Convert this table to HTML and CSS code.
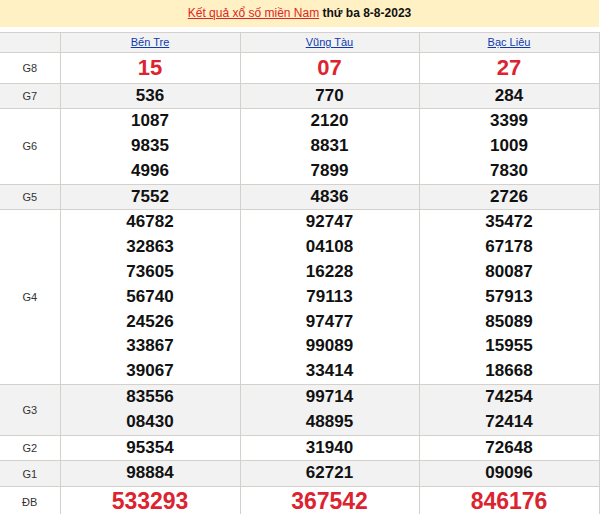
FILE: index.html
```html
<!DOCTYPE html>
<html lang="vi">
<head>
<meta charset="utf-8">
<title>Kết quả xổ số miền Nam</title>
<link rel="stylesheet" href="styles.css">
</head>
<body>
<div class="banner"><a class="title-link" href="#">Kết quả xổ số miền Nam</a> <b>thứ ba 8-8-2023</b></div>
<table class="kq">
  <colgroup><col class="c-lbl"><col class="c-a"><col class="c-b"><col class="c-c"></colgroup>
  <tr class="head alt">
    <th></th>
    <th><a href="#">Bến Tre</a></th>
    <th><a href="#">Vũng Tàu</a></th>
    <th><a href="#">Bạc Liêu</a></th>
  </tr>
  <tr class="big">
    <td class="lbl">G8</td>
    <td><div class="red">15</div></td>
    <td><div class="red">07</div></td>
    <td><div class="red">27</div></td>
  </tr>
  <tr class="alt">
    <td class="lbl">G7</td>
    <td><div class="n">536</div></td>
    <td><div class="n">770</div></td>
    <td><div class="n">284</div></td>
  </tr>
  <tr>
    <td class="lbl">G6</td>
    <td><div class="n">1087</div><div class="n">9835</div><div class="n">4996</div></td>
    <td><div class="n">2120</div><div class="n">8831</div><div class="n">7899</div></td>
    <td><div class="n">3399</div><div class="n">1009</div><div class="n">7830</div></td>
  </tr>
  <tr class="alt">
    <td class="lbl">G5</td>
    <td><div class="n">7552</div></td>
    <td><div class="n">4836</div></td>
    <td><div class="n">2726</div></td>
  </tr>
  <tr>
    <td class="lbl">G4</td>
    <td><div class="n">46782</div><div class="n">32863</div><div class="n">73605</div><div class="n">56740</div><div class="n">24526</div><div class="n">33867</div><div class="n">39067</div></td>
    <td><div class="n">92747</div><div class="n">04108</div><div class="n">16228</div><div class="n">79113</div><div class="n">97477</div><div class="n">99089</div><div class="n">33414</div></td>
    <td><div class="n">35472</div><div class="n">67178</div><div class="n">80087</div><div class="n">57913</div><div class="n">85089</div><div class="n">15955</div><div class="n">18668</div></td>
  </tr>
  <tr class="alt">
    <td class="lbl">G3</td>
    <td><div class="n">83556</div><div class="n">08430</div></td>
    <td><div class="n">99714</div><div class="n">48895</div></td>
    <td><div class="n">74254</div><div class="n">72414</div></td>
  </tr>
  <tr>
    <td class="lbl">G2</td>
    <td><div class="n">95354</div></td>
    <td><div class="n">31940</div></td>
    <td><div class="n">72648</div></td>
  </tr>
  <tr class="alt">
    <td class="lbl">G1</td>
    <td><div class="n">98884</div></td>
    <td><div class="n">62721</div></td>
    <td><div class="n">09096</div></td>
  </tr>
  <tr class="big">
    <td class="lbl">ĐB</td>
    <td><div class="red db">533293</div></td>
    <td><div class="red db">367542</div></td>
    <td><div class="red db">846176</div></td>
  </tr>
</table>
</body>
</html>
```
FILE: styles.css
```css
html, body {
  margin: 0;
  padding: 0;
  background: #ffffff;
  font-family: "Liberation Sans", Arial, sans-serif;
}

.banner {
  width: 599px;
  height: 27px;
  line-height: 27px;
  background: #fff1c4;
  text-align: center;
  font-size: 12px;
  color: #111;
  margin-bottom: 5px;
}

.banner b {
  font-weight: bold;
}

.title-link {
  color: #dc2626;
  text-decoration: underline;
}

.kq {
  width: 599px;
  border-collapse: collapse;
  table-layout: fixed;
}

.c-lbl { width: 60px; }
.c-a { width: 180px; }
.c-b { width: 179px; }
.c-c { width: 180px; }

.kq th,
.kq td {
  border: 1px solid #d4d0cc;
  padding: 0;
  text-align: center;
  vertical-align: middle;
}

.kq tr > :first-child {
  border-left: none;
}

.kq .alt {
  background: #f2f2f2;
}

.head th {
  height: 19px;
  line-height: 19px;
  font-size: 11px;
  font-weight: normal;
}

.head a {
  color: #0d3aae;
  text-decoration: underline;
}

.lbl {
  font-size: 11px;
  color: #333;
}

.n {
  font-size: 17px;
  font-weight: bold;
  color: #111;
  line-height: 24.8px;
}

.red {
  font-size: 22px;
  font-weight: bold;
  color: #dc2430;
  line-height: 29.5px;
}

.red.db {
  font-size: 23px;
}
```
